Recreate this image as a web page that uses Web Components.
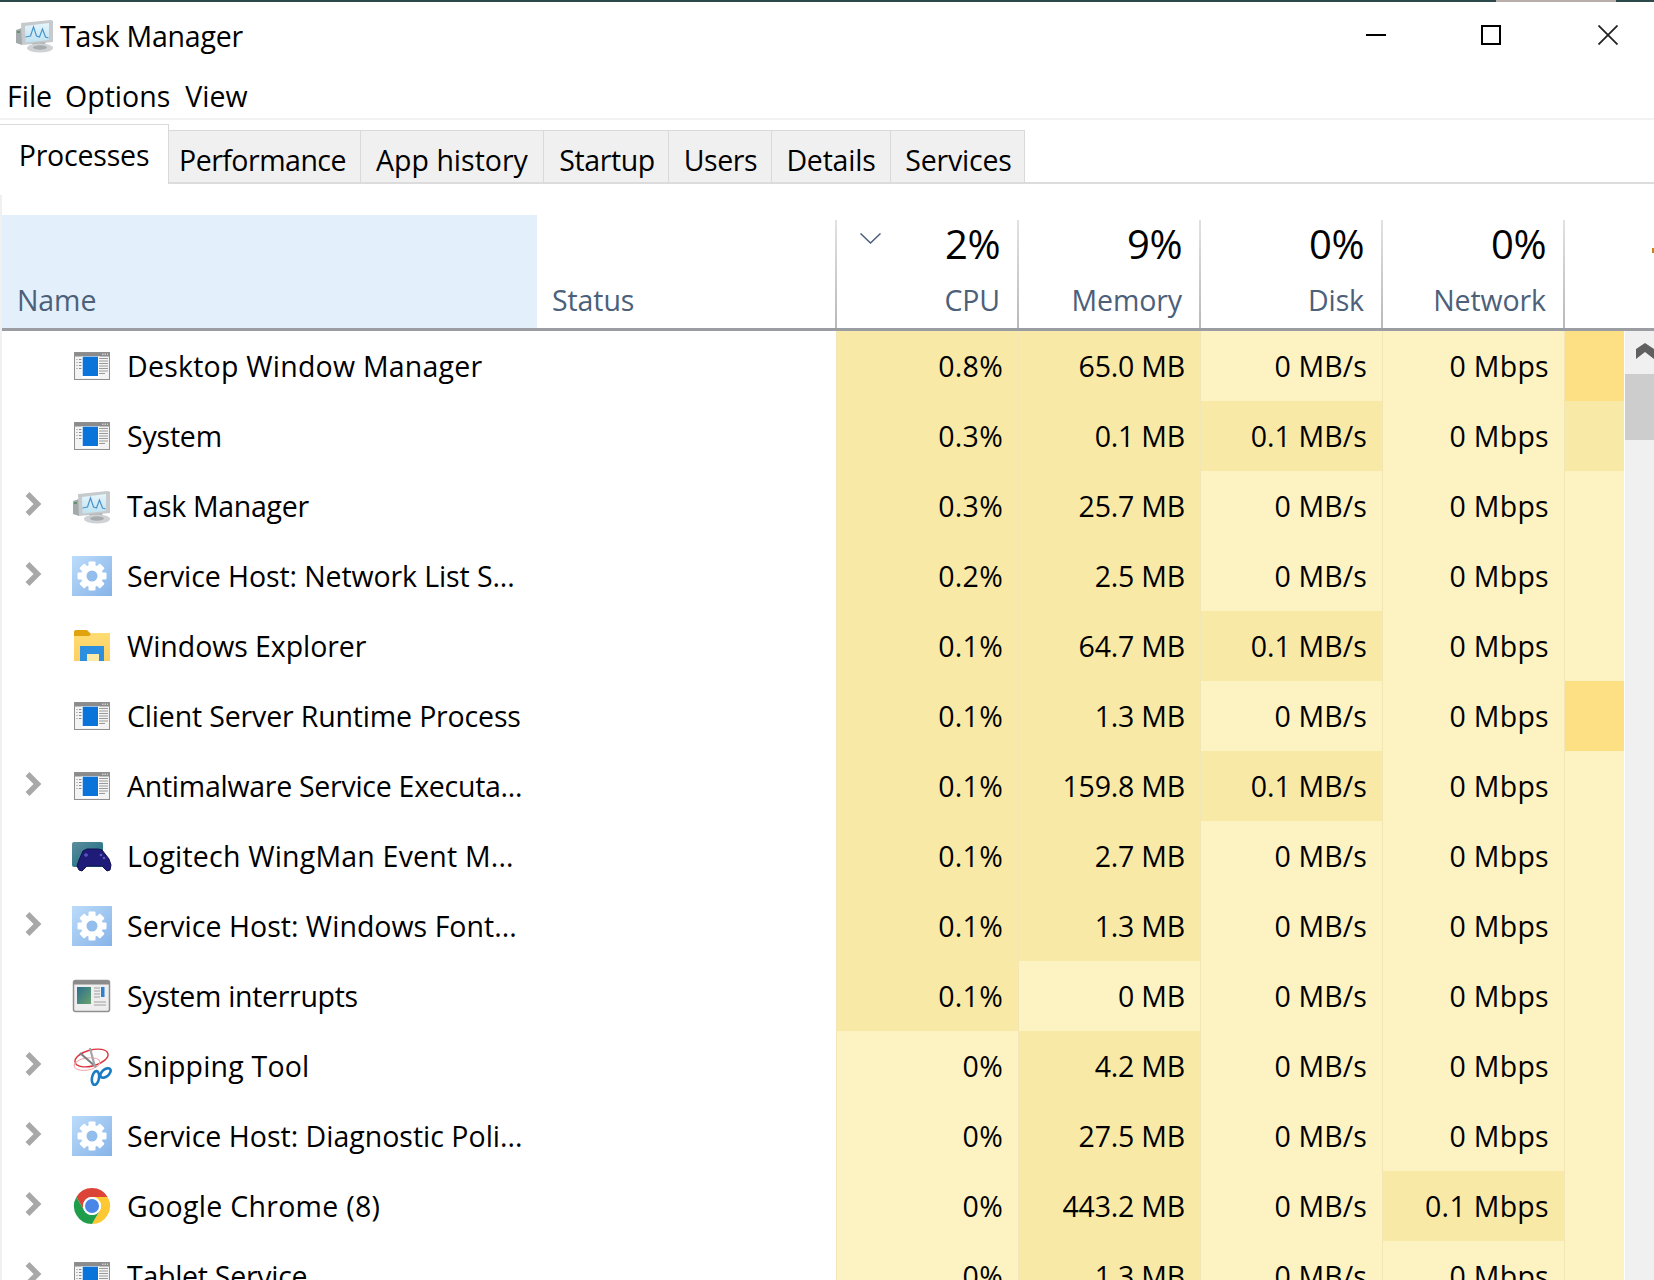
<!DOCTYPE html>
<html>
<head>
<meta charset="utf-8">
<title>Task Manager</title>
<style>
  html, body { margin: 0; padding: 0; background: #fff; height: 1280px; overflow: hidden; }
  body { font-family: "Open Sans", "Noto Sans", sans-serif; color: #000; }
</style>
</head>
<body>
<task-manager>
  <title-bar>Task Manager</title-bar>
  <menu-bar>
    <span>File</span><span>Options</span><span style="margin-left:2px">View</span>
  </menu-bar>
  <tab-strip>
    <tab-item active>Processes</tab-item>
    <tab-item style="width:192px;letter-spacing:-0.5px;padding-right:4px">Performance</tab-item>
    <tab-item style="width:183px;letter-spacing:0">App history</tab-item>
    <tab-item style="width:125px;letter-spacing:-0.4px;padding-left:2px">Startup</tab-item>
    <tab-item style="width:103px;letter-spacing:-0.4px;padding-left:1px">Users</tab-item>
    <tab-item style="width:119px">Details</tab-item>
    <tab-item style="width:134px;padding-left:2px">Services</tab-item>
  </tab-strip>
  <proc-table id="table"></proc-table>
</task-manager>

<script>
const ICONS = {
  win: `<rect x="2.5" y="6.5" width="35" height="27" fill="#f3f3f3" stroke="#8f8f8f"/>
    <rect x="3" y="7" width="34" height="3.5" fill="#8b8b8b"/>
    <path d="M30 8.2h1.5M32.5 8.2h1.500M35 8.200h1" stroke="#eee" stroke-width="1"/>
    <path d="M4.500 13.500h1M7 13.500h3M4.500 16.500h1M7 16.500h3M4.500 19.500h1M7 19.500h3M4.500 22.500h1M7 22.500h3" stroke="#8a8a8a" stroke-width="1"/>
    <rect x="9.500" y="10.500" width="18" height="21.500" fill="#fff"/>
    <rect x="10.700" y="10.700" width="15.300" height="19.300" fill="#0a74da"/>
    <path d="M27 12.500h9M27 15h9M27 17.500h9M27 20h9M27 22.500h9M27 25h9M27 27.500h6" stroke="#9a9a9a" stroke-width="1"/>`,
  task: `<path d="M1 15l6-2v17l-6-2z" fill="#a4a9ac"/>
    <path d="M2 17h3" stroke="#4c8c55" stroke-width="1.500"/>
    <path d="M6 8l30-3 2 1v21L7 30z" fill="#c6cacd"/>
    <path d="M10 11l24-3v17L10.500 27.500z" fill="url(#taskBg)"/>
    <path d="M10.500 22l5-1 3-9 3 9 3 1 3-8 3 8 3 1" fill="none" stroke="#4a94c9" stroke-width="1.200"/>
    <path d="M18 28l12-1 1 4H17z" fill="#aeb2b5"/>
    <ellipse cx="25" cy="33" rx="13" ry="4.500" fill="#cfd2d4"/>
    <ellipse cx="25" cy="32.500" rx="7" ry="2.200" fill="#a7abae"/>`,
  gear: `<rect x="0" y="0" width="40" height="40" fill="url(#gearBg)"/>
    <g fill="#fff">
      <rect x="16.500" y="5.500" width="7" height="29" rx="1"/>
      <rect x="16.500" y="5.500" width="7" height="29" rx="1" transform="rotate(45 20 20)"/>
      <rect x="16.500" y="5.500" width="7" height="29" rx="1" transform="rotate(90 20 20)"/>
      <rect x="16.500" y="5.500" width="7" height="29" rx="1" transform="rotate(135 20 20)"/>
      <circle cx="20" cy="20" r="11"/>
    </g>
    <circle cx="20" cy="20" r="5.500" fill="#93bdec"/>`,
  folder: `<path d="M2 6a2 2 0 0 1 2-2h11l4 4v4H2z" fill="#e0a20d"/>
    <path d="M2 10h15l3-3h18v28H2z" fill="url(#folderBg)"/>
    <path d="M8 35V20h24v15h-5v-7H15v7z" fill="#2b8ede"/>
    <rect x="15" y="28" width="12" height="7" fill="#fce9a8"/>`,
  pad: `<rect x="0" y="6" width="31" height="25" rx="2" fill="url(#padBg)"/>
    <path d="M7 24l4-9 4-2h11l4 1 7 9 2 6-1 5-3 1-5-5H15l-5 5-3-1-2-4z" fill="#1f1b78" stroke="#131050" stroke-width="1"/>
    <path d="M12 19h4M14 17v4" stroke="#5c58c4" stroke-width="1.300"/>
    <circle cx="29" cy="19" r="1.300" fill="#5c58c4"/>
    <circle cx="32" cy="22" r="1.300" fill="#5c58c4"/>`,
  irq: `<rect x="1.500" y="4.500" width="36" height="31" rx="2" fill="#eeeeee" stroke="#8f8f8f" stroke-width="1.500"/>
    <rect x="2" y="5" width="35" height="3.500" fill="#8b8b8b"/>
    <rect x="5" y="11" width="14" height="17" fill="url(#irqBg)"/>
    <path d="M22 12h6M22 15h6M22 18h6M22 21h6M22 26h12M22 29h12" stroke="#a0a0a0" stroke-width="1"/>
    <rect x="29" y="11" width="3.500" height="10" fill="#2f7fc9"/>`,
  snip: `<ellipse cx="19.500" cy="12" rx="17" ry="8" transform="rotate(-15 19.500 12)" fill="none" stroke="#d9343c" stroke-width="1.400"/>
    <ellipse cx="15" cy="18" rx="13" ry="6" transform="rotate(-10 15 18)" fill="none" stroke="#f0a6aa" stroke-width="1"/>
    <path d="M8 7l16 14" stroke="#7d8184" stroke-width="2.200"/>
    <path d="M18 2l5 19" stroke="#a3a6a8" stroke-width="2.200"/>
    <ellipse cx="23.500" cy="32" rx="3.500" ry="7" transform="rotate(10 23.500 32)" fill="none" stroke="#1b7cc4" stroke-width="2.600"/>
    <ellipse cx="33.500" cy="27" rx="3.500" ry="6" transform="rotate(50 33.500 27)" fill="none" stroke="#1b7cc4" stroke-width="2.600"/>`,
  chrome: `<path d="M4.400 11A18 18 0 0 1 35.600 11H20A9 9 0 0 0 12.200 24.500Z" fill="#db4437"/>
    <path d="M35.600 11A18 18 0 0 1 20 38L27.800 24.500A9 9 0 0 0 20 11Z" fill="#fcc934"/>
    <path d="M20 38A18 18 0 0 1 4.400 11L12.200 24.500A9 9 0 0 0 27.800 24.500Z" fill="#1e9e4a"/>
    <circle cx="20" cy="20" r="9" fill="#fff"/>
    <circle cx="20" cy="20" r="7" fill="#4a86e8"/>`
};

const SHARED_DEFS = `<defs>
  <linearGradient id="gearBg" x1="0" y1="0" x2="1" y2="1"><stop offset="0" stop-color="#bcdcfa"/><stop offset="1" stop-color="#86b3e8"/></linearGradient>
  <linearGradient id="folderBg" x1="0" y1="0" x2="0" y2="1"><stop offset="0" stop-color="#fedc72"/><stop offset="1" stop-color="#fdcf63"/></linearGradient>
  <linearGradient id="padBg" x1="0" y1="0" x2="1" y2="1"><stop offset="0" stop-color="#5e8d9e"/><stop offset="1" stop-color="#0e6a7c"/></linearGradient>
  <linearGradient id="irqBg" x1="0" y1="0" x2="1" y2="1"><stop offset="0" stop-color="#2a6d8e"/><stop offset="1" stop-color="#6aa36e"/></linearGradient>
  <linearGradient id="taskBg" x1="0" y1="0" x2="0" y2="1"><stop offset="0" stop-color="#e6f5fb"/><stop offset="1" stop-color="#bfe2f2"/></linearGradient>
</defs>`;

class AppIcon extends HTMLElement {
  connectedCallback() {
    const kind = this.getAttribute('kind') || 'win';
    this.attachShadow({ mode: 'open' });
    this.shadowRoot.innerHTML = `
      <style>
        :host { display: block; width: 40px; height: 40px; flex: none; }
        svg { display: block; width: 100%; height: 100%; }
      </style>
      <svg viewBox="0 0 40 40">${SHARED_DEFS}${ICONS[kind]}</svg>`;
  }
}
customElements.define('app-icon', AppIcon);

class TaskManager extends HTMLElement {
  connectedCallback() {
    this.attachShadow({ mode: 'open' });
    this.shadowRoot.innerHTML = `
      <style>
        :host { display: block; width: 1654px; height: 1280px; overflow: hidden; background: #fff; }
        .strip { height: 2px; background: linear-gradient(90deg, #2c4a4c 0, #2c4a4c 1496px, #b9aeaa 1496px, #b9aeaa 1616px, #2c4a4c 1616px); }
      </style>
      <div class="strip"></div>
      <slot></slot>`;
  }
}
customElements.define('task-manager', TaskManager);

class TitleBar extends HTMLElement {
  connectedCallback() {
    this.attachShadow({ mode: 'open' });
    this.shadowRoot.innerHTML = `
      <style>
        :host { display: flex; align-items: center; height: 70px; padding: 0 36px 0 15px; box-sizing: border-box; }
        app-icon { width: 40px; height: 40px; margin: -4px 5px 0 0; }
        .title { flex: 1; font-size: 28.500px; letter-spacing: -0.2px; margin-top: -3px; }
        .buttons { display: flex; gap: 96px; align-items: center; margin-top: -4px; }
        .buttons svg:nth-child(2) { margin-left: -1px; margin-right: 1px; }
        svg { display: block; width: 20px; height: 20px; }
      </style>
      <app-icon kind="task"></app-icon>
      <span class="title"><slot></slot></span>
      <div class="buttons">
        <svg viewBox="0 0 20 20"><path d="M0 10h20" stroke="#000" stroke-width="2"/></svg>
        <svg viewBox="0 0 20 20"><rect x="1" y="1" width="18" height="18" fill="none" stroke="#000" stroke-width="2"/></svg>
        <svg viewBox="0 0 20 20"><path d="M0.500 0.500l19 19M19.500 0.500l-19 19" stroke="#222" stroke-width="1.800"/></svg>
      </div>`;
  }
}
customElements.define('title-bar', TitleBar);

class MenuBar extends HTMLElement {
  connectedCallback() {
    this.attachShadow({ mode: 'open' });
    this.shadowRoot.innerHTML = `
      <style>
        :host { display: flex; align-items: center; gap: 13px; height: 48px; padding: 2px 0 0 7px; box-sizing: border-box;
                border-bottom: 2px solid #f2f2f2; font-size: 28.500px; letter-spacing: 0; }
      </style>
      <slot></slot>`;
  }
}
customElements.define('menu-bar', MenuBar);

class TabStrip extends HTMLElement {
  connectedCallback() {
    this.attachShadow({ mode: 'open' });
    this.shadowRoot.innerHTML = `
      <style>
        :host { display: flex; align-items: flex-end; height: 64px; box-sizing: border-box; border-bottom: 2px solid #dcdcdc; }
      </style>
      <slot></slot>`;
  }
}
customElements.define('tab-strip', TabStrip);

class TabItem extends HTMLElement {
  connectedCallback() {
    this.attachShadow({ mode: 'open' });
    this.shadowRoot.innerHTML = `
      <style>
        :host { display: flex; align-items: center; justify-content: center; box-sizing: border-box; height: 52px;
                background: #f0f0f0; border: 1px solid #d9d9d9; border-bottom: 0; border-left: 0;
                font-size: 28.500px; letter-spacing: -0.2px; padding-top: 6px; }
        :host([active]) { width: 169px; height: 60px; margin-bottom: -2px; background: #fff; padding: 0; }
      </style>
      <slot></slot>`;
  }
}
customElements.define('tab-item', TabItem);

class ProcHeader extends HTMLElement {
  connectedCallback() {
    this.attachShadow({ mode: 'open' });
    const col = (pct, label, extra = '') => `
      <div class="metric">${extra}<span class="pct">${pct}</span><span class="lbl">${label}</span></div>`;
    this.shadowRoot.innerHTML = `
      <style>
        :host { display: grid; grid-template-columns: 535px 299px repeat(4, 182px) 1fr; grid-template-rows: 113px; height: 136px; box-sizing: border-box;
                padding-top: 20px; border-bottom: 3px solid #9a9ea3; color: #4c607a; font-size: 28.500px; letter-spacing: -0.1px; }
        .name, .status { display: flex; align-items: flex-end; padding: 0 0 6px 15px; line-height: 44px; }
        .name { background: #e3f0fb; }
        .metric { position: relative; display: flex; flex-direction: column; align-items: flex-end; justify-content: flex-end;
                  padding: 0 18px 6px 0; box-sizing: border-box; margin-left: -1px; min-height: 0;
                  border-left: 2px solid; border-image: linear-gradient(#e2e2e2, #b8b8b8) 1; margin-top: 5px; }
        .pct { color: #000; font-size: 40px; line-height: 52px; letter-spacing: -0.5px; margin-bottom: 8px; flex: none; }
        .lbl { line-height: 44px; flex: none; }
        .sort { position: absolute; left: 23px; top: 13px; width: 21px; height: 11px; }
        .edge { display: flex; justify-content: flex-end; margin-left: -1px; border-left: 2px solid; border-image: linear-gradient(#e2e2e2, #b8b8b8) 1; margin-top: 5px; }
        .edge i { display: block; width: 2px; height: 5px; margin-top: 28px; background: #c8841a; }
      </style>
      <div class="name">Name</div>
      <div class="status">Status</div>
      ${col('2%', 'CPU', '<svg class="sort" viewBox="0 0 21 11"><path d="M0.500 0.500l10 9.500 10-9.500" fill="none" stroke="#4c607a" stroke-width="1.500"/></svg>')}
      ${col('9%', 'Memory')}
      ${col('0%', 'Disk')}
      ${col('0%', 'Network')}
      <div class="edge"><i></i></div>`;
  }
}
customElements.define('proc-header', ProcHeader);

class LoadCell extends HTMLElement {
  connectedCallback() {
    this.attachShadow({ mode: 'open' });
    this.shadowRoot.innerHTML = `
      <style>
        :host { display: flex; align-items: center; justify-content: flex-end; box-sizing: border-box; padding-right: 15px;
                border-left: 1px solid #f2e6b4; background: #fdf3c2; }
        :host([level="m"]) { background: #f9e9a6; }
        :host([level="h"]) { background: #fde084; }
      </style>
      <slot></slot>`;
  }
}
customElements.define('load-cell', LoadCell);

class ProcRow extends HTMLElement {
  connectedCallback() {
    const expand = this.hasAttribute('expandable');
    const kind = this.getAttribute('icon');
    this.attachShadow({ mode: 'open' });
    this.shadowRoot.innerHTML = `
      <style>
        :host { display: grid; grid-template-columns: 834px repeat(4, 182px) 60px; height: 70px; font-size: 28.500px; letter-spacing: -0.2px; }
        .name { display: flex; align-items: center; }
        .twisty { width: 70px; flex: none; display: flex; padding-left: 22px; box-sizing: border-box; }
        .twisty svg { display: block; width: 18px; height: 26px; margin-top: -4px; }
        .label { margin-left: 15px; }
      </style>
      <div class="name">
        <div class="twisty">${expand ? '<svg viewBox="0 0 18 26"><path d="M3.500 3l10 10-10 10" fill="none" stroke="#a8a8a8" stroke-width="5.500"/></svg>' : ''}</div>
        <app-icon kind="${kind}"></app-icon>
        <span class="label"><slot name="label"></slot></span>
      </div>
      <slot></slot>`;
  }
}
customElements.define('proc-row', ProcRow);

class ScrollTrack extends HTMLElement {
  connectedCallback() {
    this.attachShadow({ mode: 'open' });
    this.shadowRoot.innerHTML = `
      <style>
        :host { display: block; width: 29px; margin-left: 1px; flex: none; background: #f0f0f0; overflow: hidden; }
        svg { display: block; width: 29px; height: 43px; }
        .thumb { height: 66px; background: #cdcdcd; }
      </style>
      <svg viewBox="0 0 29 43"><polygon points="11,18 20,12 29,18 29,28 20,21 11,28" fill="#606060"/></svg>
      <div class="thumb"></div>`;
  }
}
customElements.define('scroll-track', ScrollTrack);

class ProcTable extends HTMLElement {
  connectedCallback() {
    // icon, expandable, name, letter-spacing to fit the name, then cpu, memory, disk, network, last column
    const rows = [
      ['win', 0, 'Desktop Window Manager', 0.23, ['0.8%','m'], ['65.0 MB','m'], ['0 MB/s','l'], ['0 Mbps','l'], 'h'],
      ['win', 0, 'System', -0.2, ['0.3%','m'], ['0.1 MB','m'], ['0.1 MB/s','m'], ['0 Mbps','l'], 'm'],
      ['task', 1, 'Task Manager', -0.3, ['0.3%','m'], ['25.7 MB','m'], ['0 MB/s','l'], ['0 Mbps','l'], 'l'],
      ['gear', 1, 'Service Host: Network List S...', -0.1, ['0.2%','m'], ['2.5 MB','m'], ['0 MB/s','l'], ['0 Mbps','l'], 'l'],
      ['folder', 0, 'Windows Explorer', -0.07, ['0.1%','m'], ['64.7 MB','m'], ['0.1 MB/s','m'], ['0 Mbps','l'], 'l'],
      ['win', 0, 'Client Server Runtime Process', -0.16, ['0.1%','m'], ['1.3 MB','m'], ['0 MB/s','l'], ['0 Mbps','l'], 'h'],
      ['win', 1, 'Antimalware Service Executa...', -0.27, ['0.1%','m'], ['159.8 MB','m'], ['0.1 MB/s','m'], ['0 Mbps','l'], 'l'],
      ['pad', 0, 'Logitech WingMan Event M...', 0.2, ['0.1%','m'], ['2.7 MB','m'], ['0 MB/s','l'], ['0 Mbps','l'], 'l'],
      ['gear', 1, 'Service Host: Windows Font...', 0.02, ['0.1%','m'], ['1.3 MB','m'], ['0 MB/s','l'], ['0 Mbps','l'], 'l'],
      ['irq', 0, 'System interrupts', -0.32, ['0.1%','m'], ['0 MB','l'], ['0 MB/s','l'], ['0 Mbps','l'], 'l'],
      ['snip', 1, 'Snipping Tool', 0.2, ['0%','l'], ['4.2 MB','m'], ['0 MB/s','l'], ['0 Mbps','l'], 'l'],
      ['gear', 1, 'Service Host: Diagnostic Poli...', 0, ['0%','l'], ['27.5 MB','m'], ['0 MB/s','l'], ['0 Mbps','l'], 'l'],
      ['chrome', 1, 'Google Chrome (8)', 0.3, ['0%','l'], ['443.2 MB','m'], ['0 MB/s','l'], ['0.1 Mbps','m'], 'l'],
      ['win', 1, 'Tablet Service', -0.27, ['0%','l'], ['1.3 MB','m'], ['0 MB/s','l'], ['0 Mbps','l'], 'l']
    ];
    const fit = [0.3, -0.2, 0.1, 0.3];
    const html = rows.map(([icon, exp, name, ls, cpu, mem, disk, net, extra]) => `
      <proc-row icon="${icon}" ${exp ? 'expandable' : ''}>
        <span slot="label" style="letter-spacing:${ls}px">${name}</span>
        ${[cpu, mem, disk, net].map((c, i) => `<load-cell level="${c[1]}" style="letter-spacing:${fit[i]}px">${c[0]}</load-cell>`).join('')}
        <load-cell level="${extra}"></load-cell>
      </proc-row>`).join('');
    this.attachShadow({ mode: 'open' });
    this.shadowRoot.innerHTML = `
      <style>
        :host { display: block; margin-top: 11px; height: 1085px; box-sizing: border-box; border-left: 2px solid #f0f0f0; overflow: hidden; }
        .body { display: flex; height: 949px; overflow: hidden; }
        .rows { width: 1622px; flex: none; }
      </style>
      <proc-header></proc-header>
      <div class="body">
        <div class="rows">${html}</div>
        <scroll-track></scroll-track>
      </div>`;
  }
}
customElements.define('proc-table', ProcTable);
</script>
</body>
</html>
